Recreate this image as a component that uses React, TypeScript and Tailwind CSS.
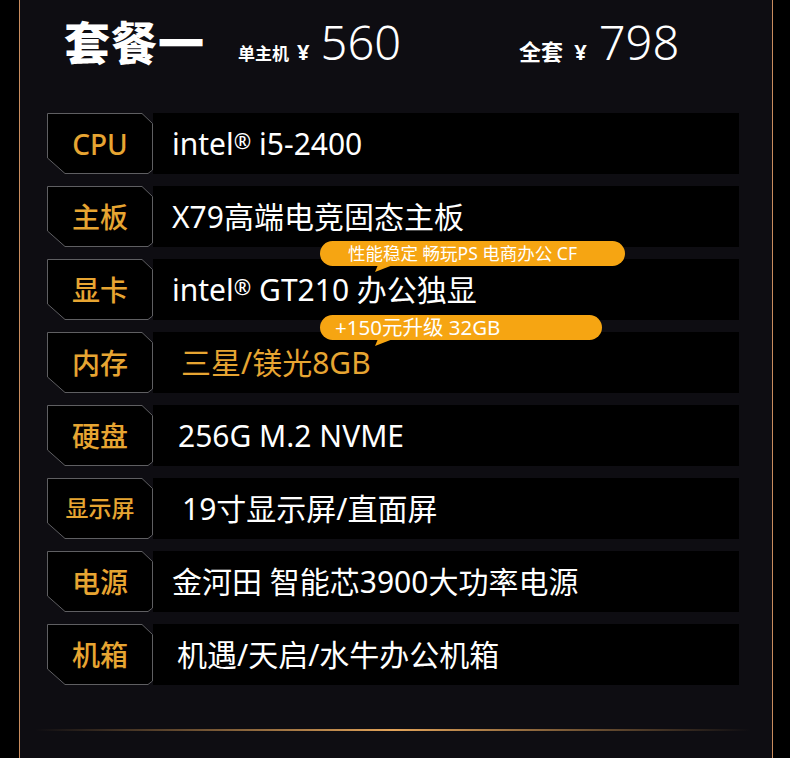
import React from "react";

type Row = {
  label: string;
  value: React.ReactNode;
  indent: string;
  small?: boolean;
  orange?: boolean;
};

const rows: Row[] = [
  {
    label: "CPU",
    value: (
      <>
        intel<sup className="relative -top-[6px] text-[21px]">®</sup> i5-2400
      </>
    ),
    indent: "pl-[19px]",
  },
  { label: "主板", value: "X79高端电竞固态主板", indent: "pl-[19px]" },
  {
    label: "显卡",
    value: (
      <>
        intel<sup className="relative -top-[6px] text-[21px]">®</sup> GT210 办公独显
      </>
    ),
    indent: "pl-[19px]",
  },
  { label: "内存", value: "三星/镁光8GB", indent: "pl-[28px]", orange: true },
  { label: "硬盘", value: "256G M.2 NVME", indent: "pl-[25px]" },
  { label: "显示屏", value: "19寸显示屏/直面屏", indent: "pl-[29px]", small: true },
  { label: "电源", value: "金河田 智能芯3900大功率电源", indent: "pl-[19px]" },
  { label: "机箱", value: "机遇/天启/水牛办公机箱", indent: "pl-[24px]" },
];

function LabelBox({ text, small }: { text: string; small?: boolean }) {
  return (
    <div className="relative flex h-[61px] w-[106px] shrink-0 items-center justify-center">
      {/* chamfered frame */}
      <svg className="absolute inset-0" width="106" height="61" viewBox="0 0 106 61">
        <polygon
          points="0.5,0.5 95,0.5 105.5,10.5 105.5,57 101,60.5 18,60.5 0.5,45"
          fill="#000"
          stroke="#5f5f62"
          strokeWidth="1"
        />
      </svg>
      <span
        className={
          "relative font-medium text-[#e7a532] " + (small ? "text-[23px]" : "text-[28px]")
        }
      >
        {text}
      </span>
    </div>
  );
}

function Bubble({ text, className, textClass }: { text: string; className: string; textClass: string }) {
  return (
    <div className={"absolute " + className}>
      <div className={"flex h-full items-center rounded-full bg-[#f6a512] text-white " + textClass}>
        {text}
      </div>
      <svg className="absolute left-[53px] top-full -mt-px" width="20" height="8" viewBox="0 0 20 8">
        <polygon points="5,0 20,0 2,7" fill="#f6a512" />
      </svg>
    </div>
  );
}

export default function App() {
  return (
    <div
      className="h-[758px] w-[790px] overflow-hidden bg-black"
      style={{ fontFamily: '"Noto Sans", "Noto Sans CJK SC", sans-serif' }}
    >
      <div className="ml-[19px] h-full w-[754px] border-x border-[#c98c5e] bg-[#0e0d12]">
        {/* Header */}
        <div className="flex h-[113px] items-baseline pl-[44px] pt-[17px] text-white">
          <h1
            className="text-[46px] font-black leading-none tracking-[1px]"
            style={{ fontFamily: '"Noto Sans CJK SC", sans-serif' }}
          >
            套餐一
          </h1>
          <span
            className="ml-[33px] text-[17px] font-bold"
            style={{ fontFamily: '"Noto Sans CJK SC", sans-serif' }}
          >
            单主机
          </span>
          <span className="ml-[8px] text-[22px] font-bold">¥</span>
          <span className="ml-[11px] text-[47px] font-light leading-none">560</span>
          <span
            className="ml-[118px] text-[22px] font-bold"
            style={{ fontFamily: '"Noto Sans CJK SC", sans-serif' }}
          >
            全套
          </span>
          <span className="ml-[11px] text-[22px] font-bold">¥</span>
          <span className="ml-[12px] text-[47px] font-light leading-none">798</span>
        </div>

        {/* Spec rows */}
        <div className="relative flex flex-col gap-[12px] pl-[27px] pr-[33px]">
          {rows.map((r) => (
            <div key={r.label} className="flex h-[61px] items-stretch">
              <LabelBox text={r.label} small={r.small} />
              <div
                className={
                  "flex flex-1 items-center bg-black text-[30px] " +
                  r.indent +
                  (r.orange ? " text-[#e7a532]" : " text-white")
                }
              >
                <span>{r.value}</span>
              </div>
            </div>
          ))}

          <Bubble
            text="性能稳定 畅玩PS 电商办公 CF"
            className="left-[300px] top-[128px] h-[25px] w-[305px]"
            textClass="pl-[28px] text-[17.5px]"
          />
          <Bubble
            text="+150元升级 32GB"
            className="left-[300px] top-[202px] h-[25px] w-[282px]"
            textClass="pl-[15px] text-[20.5px]"
          />
        </div>

        {/* Bottom gold divider */}
        <div className="ml-[15px] mt-[44px] h-[2px] w-[716px] bg-gradient-to-r from-transparent via-[#e3a45a] to-transparent" />
      </div>
    </div>
  );
}
